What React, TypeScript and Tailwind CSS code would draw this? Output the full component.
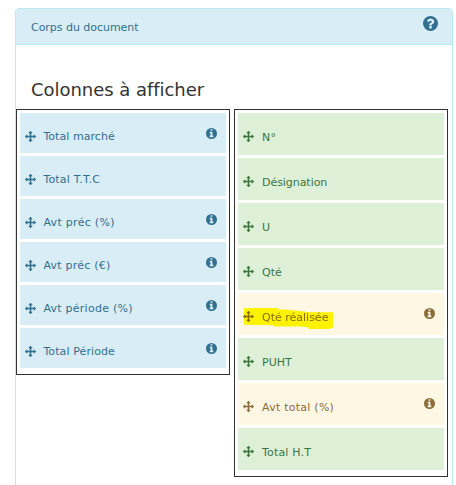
type Item = { label: string; track: string; info?: boolean; warn?: boolean; marked?: boolean };

const available: Item[] = [
  { label: "Total marché", track: "tracking-[0.06px]", info: true },
  { label: "Total T.T.C", track: "tracking-[0.18px]" },
  { label: "Avt préc (%)", track: "tracking-[0.3px]", info: true },
  { label: "Avt préc (€)", track: "tracking-[0.22px]", info: true },
  { label: "Avt période (%)", track: "tracking-[0.25px]", info: true },
  { label: "Total Période", track: "tracking-[0.1px]", info: true },
];

const selected: Item[] = [
  { label: "N°", track: "tracking-[0.2px]" },
  { label: "Désignation", track: "tracking-[-0.05px]" },
  { label: "U", track: "tracking-normal" },
  { label: "Qté", track: "tracking-normal" },
  { label: "Qté réalisée", track: "tracking-normal", info: true, warn: true, marked: true },
  { label: "PUHT", track: "tracking-normal" },
  { label: "Avt total (%)", track: "tracking-[0.25px]", info: true, warn: true },
  { label: "Total H.T", track: "tracking-[0.18px]" },
];

function MoveIcon({ className }: { className: string }) {
  return (
    <svg className={className} viewBox="0 0 1792 1792" fill="currentColor">
      <path d="M1792 896q0 26-19 45l-256 256q-19 19-45 19t-45-19-19-45v-128h-384v384h128q26 0 45 19t19 45-19 45l-256 256q-19 19-45 19t-45-19l-256-256q-19-19-19-45t19-45 45-19h128v-384h-384v128q0 26-19 45t-45 19-45-19l-256-256q-19-19-19-45t19-45l256-256q19-19 45-19t45 19 19 45v128h384v-384h-128q-26 0-45-19t-19-45 19-45l256-256q19-19 45-19t45 19l256 256q19 19 19 45t-19 45-45 19h-128v384h384v-128q0-26 19-45t45-19 45 19l256 256q19 19 19 45z" />
    </svg>
  );
}

function InfoIcon({ className }: { className: string }) {
  return (
    <svg className={className} viewBox="168 128 1536 1536" fill="currentColor" fillRule="evenodd">
      <path d="M1192 1376v-160q0-14-9-23t-23-9h-96v-512q0-14-9-23t-23-9h-320q-14 0-23 9t-9 23v160q0 14 9 23t23 9h96v320h-96q-14 0-23 9t-9 23v160q0 14 9 23t23 9h448q14 0 23-9t9-23zm-128-896v-160q0-14-9-23t-23-9h-192q-14 0-23 9t-9 23v160q0 14 9 23t23 9h192q14 0 23-9t9-23zM1704 896A768 768 0 1 1 168 896A768 768 0 1 1 1704 896z" />
    </svg>
  );
}

function HelpIcon({ className }: { className: string }) {
  return (
    <svg className={className} viewBox="128 128 1536 1536">
      <circle cx="896" cy="896" r="768" fill="currentColor" />
      <path
        d="M1024 1376v-192q0-14-9-23t-23-9h-192q-14 0-23 9t-9 23v192q0 14 9 23t23 9h192q14 0 23-9t9-23zm256-672q0-88-55.5-163t-138.5-116-170-41q-243 0-371 213-15 24 8 42l132 100q7 6 19 6 16 0 25-12 53-68 86-92 34-24 86-24 48 0 85.5 26t37.5 59q0 38-20 61t-68 45q-63 28-115.5 86.5t-52.5 125.5v36q0 14 9 23t23 9h192q14 0 23-9t9-23q0-19 21.5-49.5t54.5-49.5q32-18 49-28.500t46-35 44.500-48 28-60.500 12.500-81z"
        fill="#d9edf7"
      />
    </svg>
  );
}

function Row({
  item,
  tone,
  size,
  iconTop,
  textPos,
}: {
  item: Item;
  tone: string;
  size: string;
  iconTop: string;
  textPos: string;
}) {
  return (
    <li className={`relative isolate flex shrink-0 items-start pr-[9.5px] pl-[5px] ${size} ${tone}`}>
      <MoveIcon className={`size-[11px] shrink-0 ${iconTop}`} />
      <span className={`grow whitespace-nowrap ${item.track} ${textPos}`}>{item.label}</span>
      {item.info && <InfoIcon className="mt-[15.3px] size-[11px] shrink-0" />}
      {item.marked && (
        <svg
          className="absolute top-[14px] left-[5px] h-[24px] w-[92px] mix-blend-multiply"
          viewBox="0 0 92 24"
        >
          <path
            d="M1 1H35V2.5H43L59 4.3L66 5.2H90V20.5L86 22H66L65 20.3L57 19.5H31L30 18.2L1 17.7Z"
            fill="#fffb00"
          />
        </svg>
      )}
    </li>
  );
}

export default function App() {
  return (
    <div className="h-[485px] w-[456px] overflow-hidden bg-white pt-2 pl-[15px] font-['DejaVu_Sans',sans-serif] text-[11px] leading-4">
      <section className="h-[520px] w-[438px] rounded-[4px] border border-[#bce8f1]">
        <header className="flex h-[36px] items-start justify-between rounded-t-[3px] border-b border-[#bce8f1] bg-[#d9edf7] pr-[14.5px] pl-[15px] text-[#31708f]">
          <span className="mt-[11px] tracking-[-0.03px]">Corps du document</span>
          <HelpIcon className="mt-[7px] size-[15px]" />
        </header>
        <h2 className="mt-[33px] ml-[15px] text-[18px] leading-6 tracking-[-0.04px] text-[#333]">
          Colonnes à afficher
        </h2>
        <div className="mt-[7px] flex items-start gap-1">
          <ul className="flex h-[266px] w-[214px] flex-col gap-[3px] border border-[#333] p-[3px]">
            {available.map((item) => (
              <Row
                key={item.label}
                item={item}
                size="h-[40px]"
                tone="bg-[#d9edf7] text-[#31708f]"
                iconTop="mt-[17.5px]"
                textPos="mt-[16px] ml-[7.4px]"
              />
            ))}
          </ul>
          <ul className="flex h-[368px] w-[214px] flex-col gap-[3px] border border-[#333] p-[3px]">
            {selected.map((item) => (
              <Row
                key={item.label}
                item={item}
                size="h-[42px]"
                tone={item.warn ? "bg-[#fdf7e3] text-[#8a6d3b]" : "bg-[#dff0d8] text-[#3c763d]"}
                iconTop="mt-[18.3px]"
                textPos="mt-[17px] ml-[8px]"
              />
            ))}
          </ul>
        </div>
      </section>
    </div>
  );
}
